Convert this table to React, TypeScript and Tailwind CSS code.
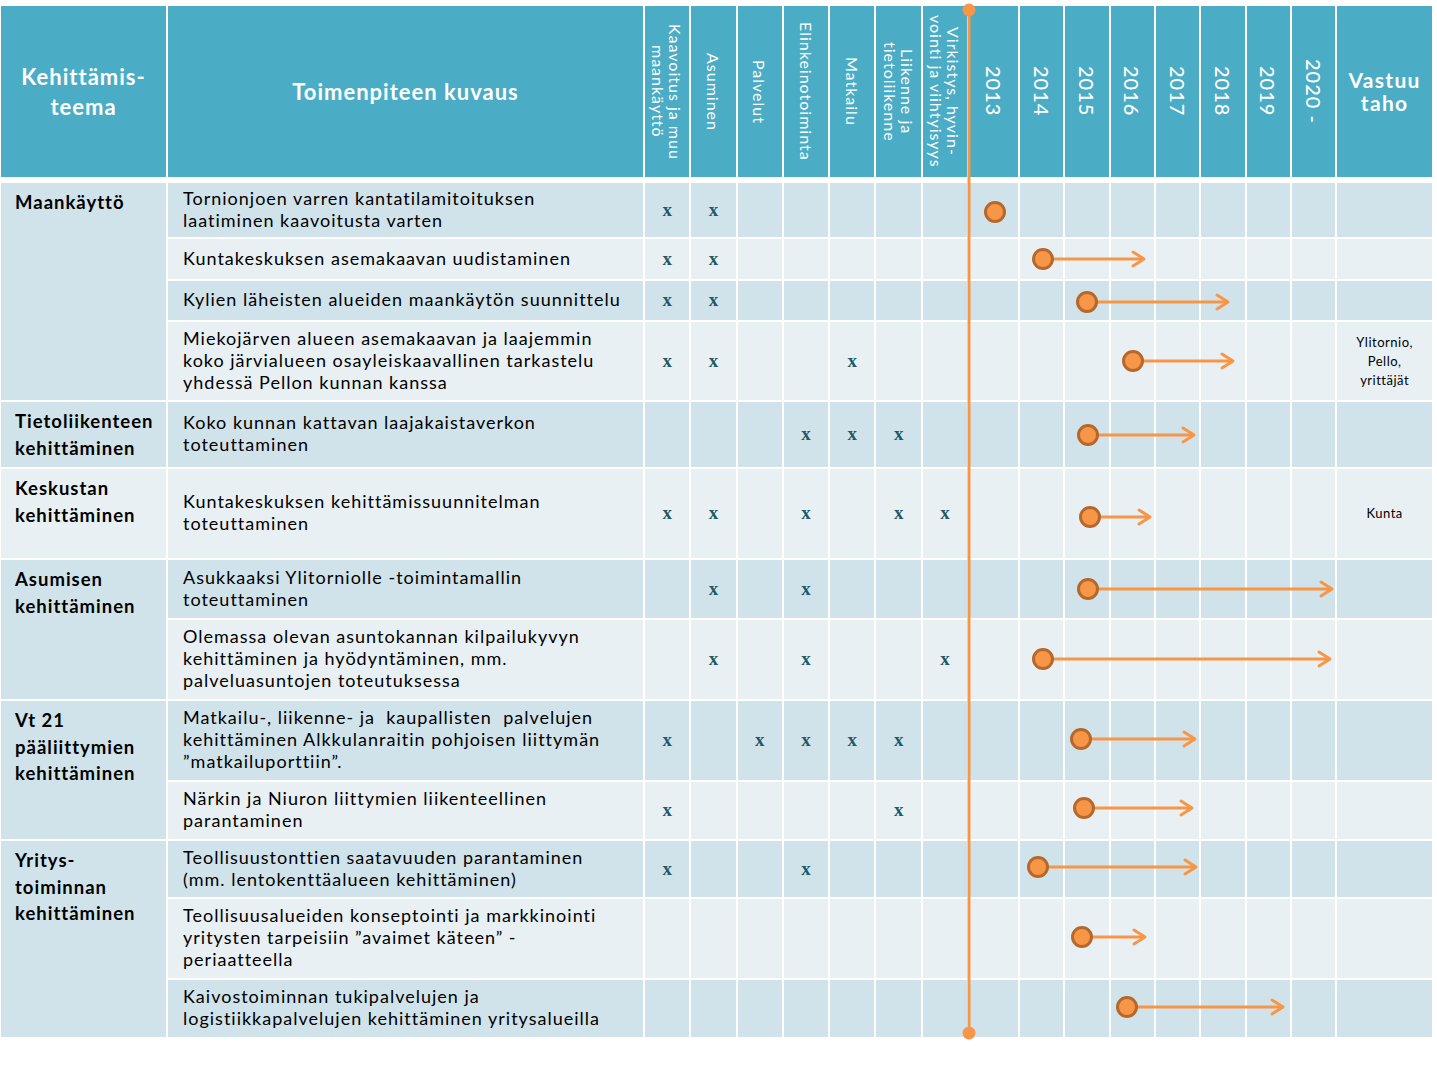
import React from "react";

const COLS =
  "grid grid-cols-[165px_475px_repeat(7,44.3px)_49px_repeat(7,43.3px)_95px] gap-x-[2px]";
const ROWS =
  "grid-rows-[54px_40px_39px_78px_65px_89px_58px_79px_79px_57px_56px_79px_57px] gap-y-[2px]";

const dark = "bg-[#d0e3ea]";
const light = "bg-[#e8f0f4]";
const head = "bg-[#4bacc6]";

const categories = [
  ["Kaavoitus ja muu", "maankäyttö"],
  ["Asuminen"],
  ["Palvelut"],
  ["Elinkeinotoiminta"],
  ["Matkailu"],
  ["Liikenne ja", "tietoliikenne"],
  ["Virkistys, hyvin-", "vointi ja viihtyisyys"],
];

const years = ["2013", "2014", "2015", "2016", "2017", "2018", "2019", "2020 -"];

type Row = { text: string[]; marks: number[]; resp?: string[] };

const rows: Row[] = [
  { text: ["Tornionjoen varren kantatilamitoituksen", "laatiminen kaavoitusta varten"], marks: [0, 1] },
  { text: ["Kuntakeskuksen asemakaavan uudistaminen"], marks: [0, 1] },
  { text: ["Kylien läheisten alueiden maankäytön suunnittelu"], marks: [0, 1] },
  {
    text: [
      "Miekojärven alueen asemakaavan ja laajemmin",
      "koko järvialueen osayleiskaavallinen tarkastelu",
      "yhdessä Pellon kunnan kanssa",
    ],
    marks: [0, 1, 4],
    resp: ["Ylitornio,", "Pello,", "yrittäjät"],
  },
  { text: ["Koko kunnan kattavan laajakaistaverkon", "toteuttaminen"], marks: [3, 4, 5] },
  { text: ["Kuntakeskuksen kehittämissuunnitelman", "toteuttaminen"], marks: [0, 1, 3, 5, 6], resp: ["Kunta"] },
  { text: ["Asukkaaksi Ylitorniolle -toimintamallin", "toteuttaminen"], marks: [1, 3] },
  {
    text: [
      "Olemassa olevan asuntokannan kilpailukyvyn",
      "kehittäminen ja hyödyntäminen, mm.",
      "palveluasuntojen toteutuksessa",
    ],
    marks: [1, 3, 6],
  },
  {
    text: [
      "Matkailu-, liikenne- ja  kaupallisten  palvelujen",
      "kehittäminen Alkkulanraitin pohjoisen liittymän",
      "”matkailuporttiin”.",
    ],
    marks: [0, 2, 3, 4, 5],
  },
  { text: ["Närkin ja Niuron liittymien liikenteellinen", "parantaminen"], marks: [0, 5] },
  { text: ["Teollisuustonttien saatavuuden parantaminen", "(mm. lentokenttäalueen kehittäminen)"], marks: [0, 3] },
  {
    text: [
      "Teollisuusalueiden konseptointi ja markkinointi",
      "yritysten tarpeisiin ”avaimet käteen” -",
      "periaatteella",
    ],
    marks: [],
  },
  {
    text: ["Kaivostoiminnan tukipalvelujen ja", "logistiikkapalvelujen kehittäminen yritysalueilla"],
    marks: [],
  },
];

const groups: Record<number, { lines: string[]; span: string }> = {
  0: { lines: ["Maankäyttö"], span: "row-span-4" },
  4: { lines: ["Tietoliikenteen", "kehittäminen"], span: "row-span-1" },
  5: { lines: ["Keskustan", "kehittäminen"], span: "row-span-1" },
  6: { lines: ["Asumisen", "kehittäminen"], span: "row-span-2" },
  8: { lines: ["Vt 21", "pääliittymien", "kehittäminen"], span: "row-span-2" },
  10: { lines: ["Yritys-", "toiminnan", "kehittäminen"], span: "row-span-3" },
};

// timeline: circle centre x, y and arrow tip x (page coordinates)
const arrows = [
  { x: 995, y: 212 },
  { x: 1043, y: 259, to: 1144 },
  { x: 1087, y: 302, to: 1228 },
  { x: 1133, y: 361, to: 1233 },
  { x: 1088, y: 435, to: 1194 },
  { x: 1090, y: 517, to: 1150 },
  { x: 1088, y: 589, to: 1332 },
  { x: 1043, y: 659, to: 1330 },
  { x: 1081, y: 739, to: 1195 },
  { x: 1084, y: 808, to: 1192 },
  { x: 1038, y: 867, to: 1196 },
  { x: 1082, y: 937, to: 1145 },
  { x: 1127, y: 1007, to: 1283 },
];

function Timeline() {
  return (
    <svg className="absolute inset-0 pointer-events-none" width={1437} height={1077}>
      <line x1={969} y1={10} x2={969} y2={1033} stroke="#f79646" strokeWidth={3} />
      <circle cx={969} cy={10} r={6.5} fill="#f79646" />
      <circle cx={969} cy={1033} r={6.5} fill="#f79646" />
      {arrows.map((a, i) => (
        <g key={i}>
          {a.to && (
            <>
              <line x1={a.x} y1={a.y} x2={a.to - 1} y2={a.y} stroke="#f79646" strokeWidth={3} />
              <polyline
                points={`${a.to - 11},${a.y - 7} ${a.to},${a.y} ${a.to - 11},${a.y + 7}`}
                fill="none"
                stroke="#f79646"
                strokeWidth={3}
                strokeLinecap="round"
                strokeLinejoin="round"
              />
            </>
          )}
          <circle cx={a.x} cy={a.y} r={9.5} fill="#f79646" stroke="#b5682c" strokeWidth={3} />
        </g>
      ))}
    </svg>
  );
}

function Header() {
  return (
    <div className={`${COLS} h-[171px] text-white`}>
      <div className={`${head} flex items-center justify-center text-center font-bold text-[22px] leading-[30px] tracking-[1px]`}>
        Kehittämis-
        <br />
        teema
      </div>
      <div className={`${head} flex items-center justify-center font-bold text-[22px] tracking-[1px]`}>
        Toimenpiteen kuvaus
      </div>
      {categories.map((c) => (
        <div key={c[0]} className={`${head} flex items-center justify-center`}>
          <div className="[writing-mode:vertical-rl] text-center text-[16px] leading-[17px] tracking-[1px] whitespace-nowrap">
            {c.map((l, i) => (
              <React.Fragment key={l}>
                {i > 0 && <br />}
                {l}
              </React.Fragment>
            ))}
          </div>
        </div>
      ))}
      {years.map((y) => (
        <div key={y} className={`${head} flex items-center justify-center`}>
          <div className="[writing-mode:vertical-rl] text-[20px] font-medium tracking-[1px] whitespace-nowrap">{y}</div>
        </div>
      ))}
      <div className={`${head} flex flex-col items-center justify-center gap-[1px] text-center font-bold text-[21px] leading-[22px] tracking-[1.3px]`}>
        <div>Vastuu</div>
        <div>taho</div>
      </div>
    </div>
  );
}

function Body() {
  return (
    <div className={`${COLS} ${ROWS} mt-[6px]`}>
      {rows.map((r, i) => {
        const bg = i % 2 === 0 ? dark : light;
        const g = groups[i];
        return (
          <React.Fragment key={i}>
            {g && (
              <div
                className={`${g.span} ${bg} pl-[14px] pt-[6px] font-bold text-[18.5px] leading-[26.5px] tracking-[1px] text-black`}
              >
                {g.lines.map((l) => (
                  <div key={l}>{l}</div>
                ))}
              </div>
            )}
            <div
              className={`${bg} pl-[15px] pb-[3px] flex flex-col justify-center text-[18px] leading-[22px] tracking-[1px] text-black whitespace-pre`}
            >
              {r.text.map((l) => (
                <div key={l}>{l}</div>
              ))}
            </div>
            {categories.map((c, j) => (
              <div
                key={c[0]}
                className={`${bg} flex items-center justify-center font-['Liberation_Serif',serif] font-bold text-[19px] text-[#215868]`}
              >
                {r.marks.includes(j) ? "x" : ""}
              </div>
            ))}
            {years.map((y) => (
              <div key={y} className={bg} />
            ))}
            <div
              className={`${bg} flex flex-col items-center justify-center text-[13px] leading-[19px] tracking-[0.5px] text-black`}
            >
              {r.resp?.map((l) => (
                <div key={l}>{l}</div>
              ))}
            </div>
          </React.Fragment>
        );
      })}
    </div>
  );
}

export default function App() {
  return (
    <div className="relative w-[1437px] h-[1077px] bg-white font-['Lato',sans-serif]">
      <div className="pt-[6px] pl-[1px]">
        <Header />
        <Body />
      </div>
      <Timeline />
    </div>
  );
}
